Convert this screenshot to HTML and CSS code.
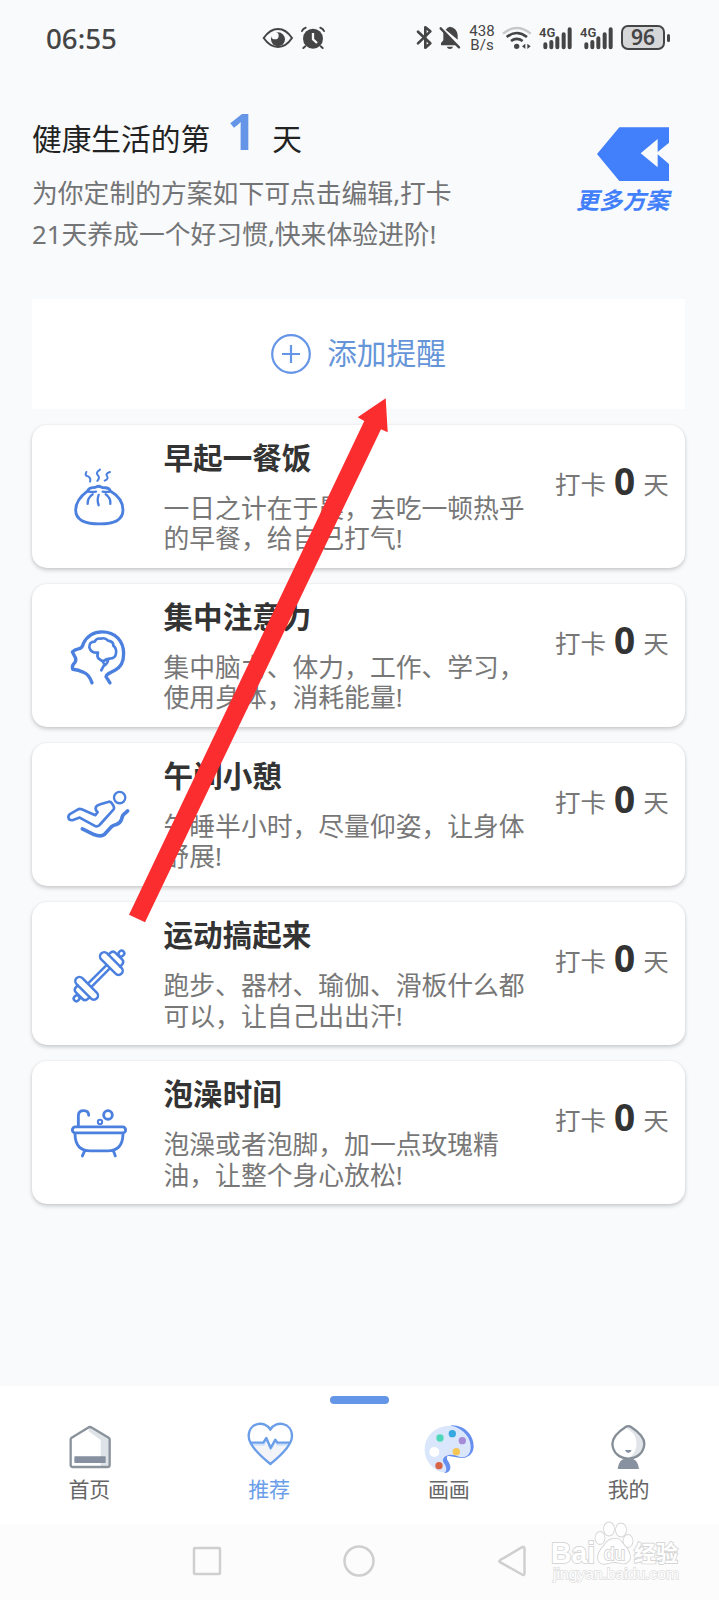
FILE: index.html
```html
<!DOCTYPE html>
<html lang="zh-CN">
<head>
<meta charset="utf-8">
<title>推荐</title>
<link rel="stylesheet" href="styles.css">
</head>
<body>
<div class="screen">
  <header class="status">
    <span class="time">06:55</span>
    <svg class="status-mid" width="64" height="30" viewBox="784 68 192 90">
      <path d="M789 113Q808 86 832 86T874 113Q856 140 832 140T789 113Z" fill="none" stroke="#454545" stroke-width="6"/>
      <circle cx="832" cy="117" r="21" fill="#454545"/><circle cx="823" cy="106" r="11" fill="#f9fafc"/>
      <circle cx="937" cy="115" r="30" fill="#454545"/>
      <path d="M904 92Q907 84 915 82M970 92Q967 84 959 82M914 138l-6 5M960 138l6 5" fill="none" stroke="#454545" stroke-width="6" stroke-linecap="round"/>
      <path d="M937 98V117L949 128" fill="none" stroke="#f9fafc" stroke-width="7"/>
    </svg>
    <div class="status-right">
      <svg class="bt" width="45" height="28" viewBox="168 72 135 84">
        <path d="M174 95L211 130L196 143V82L211 94L174 130" fill="none" stroke="#454545" stroke-width="8" stroke-linejoin="round" stroke-linecap="round"/>
        <path d="M257 89Q262 82 270 80Q291 84 293 105V119ZM250 94L291 136H243V129L250 121Z" fill="#454545"/>
        <path d="M242 85L297 142" stroke="#454545" stroke-width="7" stroke-linecap="round"/>
        <path d="M260 140h19q-2 7-9 7t-10-7Z" fill="#454545"/>
      </svg>
      <div class="speed"><span>438</span><span>B/s</span></div>
      <svg class="wifi" width="30" height="26" viewBox="426 72 90 78">
        <path d="M429 98Q470 64 512 98" fill="none" stroke="#c6c8ca" stroke-width="7"/>
        <path d="M440 108Q470 84 501 108M453 120Q470 107 488 120" fill="none" stroke="#454545" stroke-width="8"/>
        <circle cx="470" cy="136" r="8" fill="#454545"/>
        <path d="M486 136l10-8v16ZM512 136l-10-8v16Z" fill="#454545"/>
      </svg>
      <div class="signal"><span>4G</span>
        <svg width="33" height="24" viewBox="538 74 99 72"><path d="M557 129v9M575 122v16M593 111v27M612 99v39M630 84v54" stroke="#454545" stroke-width="12" stroke-linecap="round"/></svg>
      </div>
      <div class="signal"><span>4G</span>
        <svg width="33" height="24" viewBox="538 74 99 72"><path d="M557 129v9M575 122v16M593 111v27M612 99v39M630 84v54" stroke="#454545" stroke-width="12" stroke-linecap="round"/></svg>
      </div>
      <div class="battery">96</div><i class="battery-tip"></i>
    </div>
  </header>

  <section class="intro">
    <div>
      <h1>健康生活的第<b>1</b>天</h1>
      <p>为你定制的方案如下可点击编辑,打卡<br>21天养成一个好习惯,快来体验进阶!</p>
    </div>
    <div class="more">
      <svg width="72" height="54" viewBox="710 380 216 162"><path d="M710 461L777 381H926V427L892 455V416L841 459L892 501V462L926 491V542H777Z" fill="#427ffb"/></svg>
      <span>更多方案</span>
    </div>
  </section>

  <main>
    <div class="add">
      <svg width="40" height="40" viewBox="0 0 40 40" fill="none" stroke="#6595e6" stroke-width="2.200"><circle cx="20" cy="20" r="18.800"/><path d="M20 11v18M11 20h18"/></svg>
      <span>添加提醒</span>
    </div>

    <article class="card">
      <svg class="icon" viewBox="36 403 396 430">
        <path stroke-width="8.500" d="M203 601C210 585 221 595 229 589Q236 585 243 589C254 595 265 586 271 601Q309 623 309 658C309 689 279 700 239 700S167 689 167 658C167 630 187 613 203 601Z"/>
        <path stroke-width="7" d="M203 640Q202 622 218 611M236 613Q230 629 236 644M271 640Q273 622 257 611M203 603Q219 605 228 603M271 603Q257 605 248 603"/>
        <path stroke-width="6" d="M199 544Q193 556 204 557Q214 562 210 573M240 537Q226 546 233 553Q241 561 232 571M270 544Q255 549 261 556Q267 565 254 570"/>
      </svg>
      <div class="body"><h2>早起一餐饭</h2><p>一日之计在于晨，去吃一顿热乎<br>的早餐，给自己打气!</p></div>
      <div class="count">打卡<b>0</b>天</div>
    </article>
    <article class="card">
      <svg class="icon" viewBox="36 11 396 430">
        <path stroke-width="10" d="M216 308Q208 284 192 277Q174 268 158 267Q155 258 161 251Q169 243 167 234L157 215Q164 208 175 206Q187 204 190 190C203 164 226 155 246 155C287 155 311 183 311 220C311 245 303 261 286 269C270 277 258 283 258 289L270 308"/>
        <path stroke-width="8" d="M234 217Q213 219 208 201Q207 185 224 184Q229 173 242 175Q256 171 264 181Q281 183 280 196Q291 205 288 219Q287 235 269 235Q255 237 249 244L236 235Q230 229 234 217M265 237Q262 253 251 257L244 270M248 242l6 13"/>
      </svg>
      <div class="body"><h2>集中注意力</h2><p>集中脑力、体力，工作、学习，<br>使用身体，消耗能量!</p></div>
      <div class="count">打卡<b>0</b>天</div>
    </article>
    <article class="card">
      <svg class="icon" viewBox="36 488 396 430">
        <circle stroke-width="7" cx="299" cy="652" r="17"/>
        <path stroke-width="8" d="M157 720C143 721 141 706 152 700L173 688Q178 684 185 687L226 705L233 696Q224 688 228 680Q230 675 241 672L264 665Q272 662 277 671Q285 682 281 687L238 735Q231 741 223 736L179 712Z"/>
        <path stroke-width="11" d="M187 746L222 763Q242 771 253 763L275 739Q278 736 289 733Q301 729 305 716Q307 704 315 699L323 692"/>
      </svg>
      <div class="body"><h2>午间小憩</h2><p>午睡半小时，尽量仰姿，让身体<br>舒展!</p></div>
      <div class="count">打卡<b>0</b>天</div>
    </article>
    <article class="card">
      <svg class="icon" viewBox="36 36 396 430">
        <g stroke-width="7.500" transform="translate(237 258) rotate(-45)">
          <path d="M-38-7H38M-38 7H38"/>
          <rect x="-65" y="-43" width="25" height="86" rx="12.500"/><rect x="40" y="-43" width="25" height="86" rx="12.500"/>
          <path d="M-65-25H-71Q-84-25-84-14V14Q-84 25-71 25H-65M65-25H71Q84-25 84-14V14Q84 25 71 25H65"/>
          <rect x="-104" y="-8" width="18" height="16" rx="8"/><rect x="86" y="-8" width="18" height="16" rx="8"/>
        </g>
      </svg>
      <div class="body"><h2>运动搞起来</h2><p>跑步、器材、瑜伽、滑板什么都<br>可以，让自己出出汗!</p></div>
      <div class="count">打卡<b>0</b>天</div>
    </article>
    <article class="card">
      <svg class="icon" viewBox="36 514 396 430">
        <g stroke-width="8.500"><rect x="157" y="712" width="160" height="18" rx="9"/>
        <path d="M165 734Q166 784 211 784H263Q308 784 309 734M193 786L187 799M281 786L286 799M175 710V677Q176 663 191 663Q206 663 206 677"/>
        <circle cx="264" cy="676" r="13"/></g><circle stroke-width="6" cx="240" cy="697" r="6.500"/>
      </svg>
      <div class="body"><h2>泡澡时间</h2><p>泡澡或者泡脚，加一点玫瑰精<br>油，让整个身心放松!</p></div>
      <div class="count">打卡<b>0</b>天</div>
    </article>
  </main>

  <nav class="tabs">
    <i class="indicator"></i>
    <a class="tab">
      <svg width="60" height="60" viewBox="178 144 180 180">
        <path d="M264 172L327 207V290H300V210L264 184Z" fill="#dee3e8"/>
        <path d="M210 286V208Q210 205 213 203L262 173Q268 169 274 173L324 203Q327 205 327 208V284Q327 291 320 291H217Q210 291 210 286Z" fill="none" stroke="#8a929c" stroke-width="7"/>
        <rect x="221" y="259" width="94" height="20" rx="2" fill="#8790a0"/>
      </svg><span>首页</span>
    </a>
    <a class="tab active">
      <svg width="60" height="60" viewBox="718 144 180 180">
        <path d="M752 223H866Q847 250 809 281Q773 252 752 223Z" fill="#f3f4f8"/>
        <path d="M753 224H789L798 211L810 238L824 215L831 224H863" fill="none" stroke="#cfe0fa" stroke-width="6"/>
        <path d="M809 282Q744 230 744 198C744 157 793 150 809 179C825 150 874 157 874 198Q874 230 809 282ZM751 218H788L797 204L810 234L824 209L830 218H867" fill="none" stroke="#6b9ee9" stroke-width="7" stroke-linejoin="round"/>
      </svg><span>推荐</span>
    </a>
    <a class="tab">
      <svg width="60" height="60" viewBox="178 144 180 180">
        <path d="M274 166C321 165 343 202 342 230C341 255 320 265 303 264L264 257Q258 265 267 276C279 297 268 308 257 309L240 295Z" fill="#668ff0"/>
        <path d="M195 241C195 189 236 166 276 167C316 177 335 208 333 234C331 260 313 264 300 261Q284 253 266 255Q242 263 253 280C267 300 257 312 248 307C222 301 195 274 195 241Z" fill="#d9e6fc"/>
        <circle cx="224" cy="246" r="15" fill="#fff"/><circle cx="241" cy="204" r="11" fill="#4fd8b7"/><circle cx="278" cy="191" r="11" fill="#35a9df"/><circle cx="308" cy="212" r="11" fill="#a58bd7"/><circle cx="290" cy="245" r="11" fill="#f4c653"/><circle cx="238" cy="287" r="11" fill="#d96549"/>
      </svg><span>画画</span>
    </a>
    <a class="tab">
      <svg width="60" height="60" viewBox="717 144 180 180">
        <path d="M805 168Q854 198 852 222Q849 260 805 265Q833 248 829 213Q826 188 798 173Z" fill="#e1e5e9"/>
        <path d="M798 170Q805 167 812 170Q854 197 853 222C851 248 833 265 805 266C777 265 759 248 757 222Q757 196 798 170Z" fill="none" stroke="#858e97" stroke-width="7"/>
        <path d="M795 240H815Q812 249 805 249T795 240ZM773 297Q776 272 791 267H819Q834 272 837 297Z" fill="#8791a0"/>
      </svg><span>我的</span>
    </a>
  </nav>

  <footer class="sysnav">
    <svg width="30" height="34" viewBox="0 0 30 34"><rect x="2" y="4" width="26" height="26" rx="1"/></svg>
    <svg width="34" height="34" viewBox="0 0 34 34"><circle cx="17" cy="17" r="14.500"/></svg>
    <svg width="30" height="34" viewBox="0 0 30 34"><path d="M3 16.200L25.500 3Q27.500 2.500 27.500 5V29Q27.500 32 25 30.500L3 18.200Q1.500 17.200 3 16.200Z"/></svg>
  </footer>

  <svg class="watermark" width="135" height="66" viewBox="0 0 135 66" aria-hidden="true">
    <g class="wm">
      <text x="5" y="43" font-size="29" textLength="44" lengthAdjust="spacingAndGlyphs" font-weight="700">Bai</text>
      <ellipse cx="54" cy="18" rx="4.500" ry="6"/><ellipse cx="63" cy="9" rx="5" ry="6.500"/><ellipse cx="75" cy="10" rx="5" ry="6.500"/><ellipse cx="82" cy="21" rx="4.500" ry="6"/>
      <path d="M68 19Q74 18 77 24Q84 31 84 38Q82 45 74 43Q68 41 63 43Q53 46 52 38Q52 32 58 26Q62 19 68 19Z"/>
      <text x="58" y="40" font-size="18" textLength="21" lengthAdjust="spacingAndGlyphs">du</text>
      <text x="88" y="41" font-size="22" textLength="44" lengthAdjust="spacingAndGlyphs" font-weight="700">经验</text>
      <text class="thin" x="7" y="59" font-size="15" textLength="126" lengthAdjust="spacingAndGlyphs">jingyan.baidu.com</text>
    </g>
  </svg>

  <svg class="pointer" width="719" height="1600" viewBox="0 0 719 1600" aria-hidden="true">
    <path d="M385.700 398.300L357.700 417.300L364.300 421L129 914.700L145 922.300L381 429.300L387.700 432.300Z" fill="#fb2d2f"/>
  </svg>
</div>
</body>
</html>
```

FILE: styles.css
```css
* { box-sizing: border-box; }
body { margin: 0; background: #f9fafc; font-family: "Noto Sans", "Noto Sans CJK SC", sans-serif; color: #333; }
svg { display: block; flex: none; }
h1, h2, p { margin: 0; font-weight: 400; white-space: nowrap; }
.screen { position: relative; width: 719px; height: 1600px; overflow: hidden; display: flex; flex-direction: column; }

.status { height: 75px; padding: 0 49px 0 46px; display: flex; align-items: center; color: #454545; }
.time { font-size: 27.7px; font-weight: 500; width: 216px; line-height: 40px; }
.status-right { margin-left: auto; display: flex; align-items: center; }
.bt { margin-right: 8px; }
.speed { width: 26px; display: flex; flex-direction: column; align-items: center; font: 400 15px/14px Roboto, sans-serif; margin-right: 7px; }
.wifi { margin-right: 7px; }
.signal { position: relative; margin-right: 8px; }
.signal span { position: absolute; left: 0; top: 0; font: 600 13px/13px Roboto, sans-serif; }
.battery { width: 44px; height: 25px; border: 2px solid #454545; border-radius: 7px; background: #d6d7d9; font-size: 21px; font-weight: 600; line-height: 21px; text-align: center; }
.battery-tip { width: 3px; height: 8px; margin-left: 2px; border-radius: 2px; background: #454545; }

.intro { height: 224px; padding: 34px 50px 0 32px; display: flex; justify-content: space-between; }
.intro h1 { font-size: 29.7px; line-height: 60px; height: 64px; color: #222; }
.intro h1 b { font-size: 51px; line-height: 0; color: #6595e6; margin: 0 16px 0 17px; }
.intro p { font-size: 25.8px; line-height: 40.5px; color: #737476; }
.more { padding-top: 18px; display: flex; flex-direction: column; align-items: flex-end; }
.more span { margin-top: 4px; font-size: 23.3px; line-height: 30px; font-weight: 700; font-style: italic; color: #427ffb; }

main { height: 1087px; padding: 0 34px 0 32px; }
.add { height: 110px; margin-bottom: 15.5px; background: #fff; display: flex; align-items: center; justify-content: center; gap: 16px; font-size: 29.7px; color: #6595d8; }
.add span { line-height: 40px; padding-bottom: 3px; }
.card { height: 143.2px; margin-bottom: 16px; border-radius: 15px; background: #fff; box-shadow: 0 2px 4px rgba(0, 0, 0, .2), 0 0 2px rgba(0, 0, 0, .06); display: flex; }
.icon { width: 132px; height: 143.2px; fill: none; stroke: #4c80df; stroke-linecap: round; stroke-linejoin: round; }
.body { width: 391px; padding-top: 12px; margin-left: -0.5px; margin-right: 0.5px; }
.body h2 { font-size: 29.6px; line-height: 42px; font-weight: 700; height: 56px; }
.body p { font-size: 25.8px; line-height: 30.5px; color: #777; }
.count { padding-top: 30px; font-size: 25.5px; line-height: 58px; color: #777; white-space: nowrap; }
.count b { font-size: 37px; line-height: 0; color: #333; margin: 0 8px; position: relative; top: 1px; }

.tabs { position: relative; height: 138px; background: #fff; display: flex; padding-top: 32px; }
.indicator { position: absolute; left: 330px; top: 10px; width: 59px; height: 8px; border-radius: 4px; background: #6595e6; }
.tab { flex: 1; display: flex; flex-direction: column; align-items: center; font-size: 21px; line-height: 23px; color: #666; }
.tab span { margin-left: -1px; }
.active { color: #6b9ee9; }
.sysnav { height: 76px; background: #fcfcfc; display: flex; justify-content: center; padding: 20px 1px 0 0; gap: 120.5px; }
.sysnav svg { fill: none; stroke: #cfcfcf; stroke-width: 2.5px; }
.watermark { position: absolute; left: 546px; top: 1520px; }
.wm { fill: #fff; stroke: #d6d6d6; stroke-width: 1.8px; paint-order: stroke; font-family: "Liberation Sans", "Noto Sans CJK SC", sans-serif; }
.thin { stroke-width: 1.4px; stroke: #dedede; }
.pointer { position: absolute; left: 0; top: 0; }
```
